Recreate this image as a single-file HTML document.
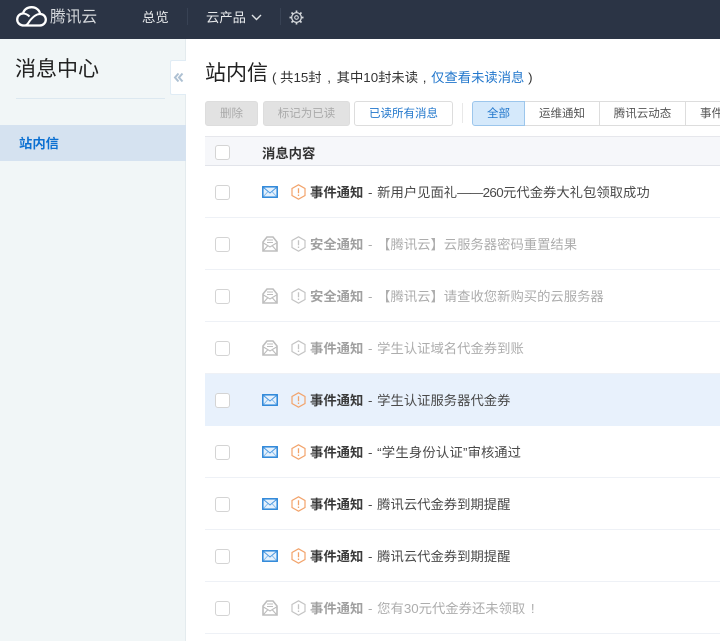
<!DOCTYPE html>
<html lang="zh"><head><meta charset="utf-8"><title>消息中心</title>
<style>
*{box-sizing:border-box}
html,body{margin:0;padding:0}
body{width:720px;height:641px;overflow:hidden;position:relative;background:#fff;font-family:"Liberation Sans","Noto Sans CJK SC",sans-serif;font-size:13.33px;color:#333}
.a{position:absolute;white-space:nowrap}
#nav{left:0;top:0;width:720px;height:39px;background:#2b3445}
#side{left:0;top:39px;width:186px;height:602px;background:#f1f6f7;border-right:1px solid #e4ebee}
.btn{height:25px;line-height:24px;text-align:center;font-size:11.5px;border:1px solid #ddd;border-radius:3px;top:101px}
.dis{background:#e2e2e2;color:#aaa;border-color:#ddd}
.tab{top:101px;height:25px;line-height:24px;text-align:center;font-size:11.5px;border:1px solid #ddd;border-left:0;color:#555;background:#fff}
.cb{left:215px;width:15px;height:15px;border:1px solid #d4d4d4;border-radius:3px;background:#fff}
.row{left:205px;width:515px;height:52px;border-bottom:1px solid #eef1f6}
.t{left:310px;font-size:13.33px;line-height:20px;word-spacing:1px;margin-top:1px}
.t b{font-weight:bold}
.un{color:#4a4a4a}.un b{color:#3a3a3a}
.rd{color:#adadad}.rd b{color:#a0a0a0}
.c{display:inline-block;text-align:center}
svg{position:absolute;overflow:visible}
</style></head><body>
<div class="a" id="nav">
<svg style="left:16px;top:6px" width="31" height="21" viewBox="0 0 31 21" fill="none" stroke="#fff" stroke-width="2.300" stroke-linejoin="round"><path d="M8 19.500C3.500 19.500 1.200 16.500 1.200 13.500C1.200 10 4 7.500 7 7.500C8 3.500 11.500 1.200 15.500 1.200C20 1.200 23.500 4 24.200 8C27.500 8 29.800 10.500 29.800 13.800C29.800 17 27 19.500 23.500 19.500H8Z"/><path d="M24.200 8C20 8 17 11 14 14.500C12.500 16.500 11.500 19.500 8 19.500M7 7.500C10 7.500 12 9 13.500 10.500" stroke-width="2"/></svg>
<div class="a" style="left:50px;top:8px;font-size:15.700px;line-height:20px;color:#d5d8dc">腾讯云</div>
<div class="a" style="left:142px;top:8px;line-height:20px;color:#e6e8ea">总览</div>
<div class="a" style="left:187px;top:8px;width:1px;height:17px;background:#384254"></div>
<div class="a" style="left:206px;top:8px;line-height:20px;color:#e6e8ea">云产品</div>
<svg style="left:251px;top:14px" width="11" height="7" viewBox="0 0 11 7" fill="none" stroke="#dfe2e5" stroke-width="1.400"><path d="M1 1L5.500 5.500L10 1"/></svg>
<div class="a" style="left:280px;top:8px;width:1px;height:17px;background:#384254"></div>
<svg style="left:289px;top:10px" width="15" height="15" viewBox="0 0 15 15" fill="none" stroke="#d5d8dc"><circle cx="7.500" cy="7.500" r="4.800" stroke-width="1.200"/><circle cx="7.500" cy="7.500" r="1.800" stroke-width="1.100"/><path stroke-width="1.700" d="M7.500 .5V2.800M7.500 12.200V14.500M.5 7.500H2.800M12.200 7.500H14.500M2.500 2.500L4.200 4.200M10.800 10.800L12.500 12.500M2.500 12.500L4.200 10.800M10.800 4.200L12.500 2.500"/></svg>
</div>
<div class="a" id="side"></div>
<div class="a" style="left:15px;top:56px;font-size:21px;line-height:28px;color:#222">消息中心</div>
<div class="a" style="left:16px;top:98px;width:149px;height:1px;background:#dce8f0"></div>
<div class="a" style="left:170px;top:60px;width:16px;height:35px;background:#fff;border:1px solid #e0ecf5;border-right:0;border-radius:2px 0 0 2px"></div>
<svg style="left:174px;top:73px" width="9" height="9" viewBox="0 0 9 9" fill="none" stroke="#adc0d2" stroke-width="2"><path d="M4.500 .5L1 4.500L4.500 8.500M8.500 .5L5 4.500L8.500 8.500"/></svg>
<div class="a" style="left:0;top:125px;width:186px;height:36px;background:#d5e2f0"></div>
<div class="a" style="left:19px;top:134px;line-height:20px;font-weight:bold;color:#0b70d2">站内信</div>

<div class="a" style="left:205px;top:59px;font-size:21px;line-height:30px;color:#222">站内信</div>
<div class="a" style="left:272px;top:68px;line-height:20px;color:#333">( 共15封<span class="c" style="width:15px">,</span>其中10封未读<span class="c" style="width:13px">,</span><span style="color:#2277cc">仅查看未读消息</span> )</div>

<div class="a btn dis" style="left:205px;width:53px">删除</div>
<div class="a btn dis" style="left:263px;width:87px">标记为已读</div>
<div class="a btn" style="left:354px;width:99px;background:#fff;color:#2277cc">已读所有消息</div>
<div class="a" style="left:462px;top:103px;width:1px;height:20px;background:#e8e8e8"></div>
<div class="a tab" style="left:472px;width:53px;background:#d5e9fb;border:1px solid #9cc6ec;border-radius:3px 0 0 3px;color:#2277cc">全部</div>
<div class="a tab" style="left:525px;width:75px">运维通知</div>
<div class="a tab" style="left:600px;width:86px">腾讯云动态</div>
<div class="a tab" style="left:686px;width:75px">事件通知</div>

<div class="a" style="left:205px;top:136px;width:515px;height:30px;background:#f6f7fa;border-top:1px solid #e6e7ec;border-bottom:1px solid #e2e4ea"></div>
<div class="a cb" style="top:145px"></div>
<div class="a" style="left:262px;top:144px;line-height:20px;font-weight:bold;color:#333">消息内容</div>

<div class="a row" style="top:166px"></div>
<div class="a row" style="top:218px"></div>
<div class="a row" style="top:270px"></div>
<div class="a row" style="top:322px"></div>
<div class="a row" style="top:374px;background:#e8f1fc;border-bottom:0"></div>
<div class="a row" style="top:426px"></div>
<div class="a row" style="top:478px"></div>
<div class="a row" style="top:530px"></div>
<div class="a row" style="top:582px"></div>

<svg width="0" height="0"><defs>
<g id="m"><rect x=".8" y=".8" width="14.400" height="10.400" fill="#e6f1fc" stroke="#2a85d8" stroke-width="1.500"/><path d="M1.500 1.500L8 7L14.500 1.500" fill="none" stroke="#4a98e0" stroke-width="1"/><path d="M1.500 10.500L6 5.500M14.500 10.500L10 5.500" fill="none" stroke="#7db6ea" stroke-width=".9"/></g>
<g id="o" fill="none" stroke="#bdbdbd"><path d="M1 6L5 1H11L15 6V15H1Z" stroke-width="1.600"/><path d="M5 4H11M5 6.500H11" stroke-width="1"/><path d="M1.500 7L8 11L14.500 7M1.500 14.500L6 9.500M14.500 14.500L10 9.500" stroke-width="1.100"/></g>
<g id="h"><path d="M7.500 .8L14 4.500V11.500L7.500 15.200L1 11.500V4.500Z" fill="none" stroke-width="1.200"/><path d="M7.500 4.300V9.300M7.500 10.500V12" fill="none" stroke-width="1.300"/></g>
</defs></svg>

<div class="a cb" style="top:185px"></div>
<svg style="left:262px;top:186px" width="16" height="12"><use href="#m"/></svg>
<svg style="left:291px;top:184px" width="15" height="16" stroke="#f2a36b"><use href="#h"/></svg>
<div class="a t un" style="top:182px"><b>事件通知</b> - 新用户见面礼<span style="letter-spacing:-.6px">——260</span>元代金券大礼包领取成功</div>

<div class="a cb" style="top:237px"></div>
<svg style="left:262px;top:236px" width="16" height="16"><use href="#o"/></svg>
<svg style="left:291px;top:236px" width="15" height="16" stroke="#c4c4c4"><use href="#h"/></svg>
<div class="a t rd" style="top:234px"><b>安全通知</b> - 【腾讯云】云服务器密码重置结果</div>

<div class="a cb" style="top:289px"></div>
<svg style="left:262px;top:288px" width="16" height="16"><use href="#o"/></svg>
<svg style="left:291px;top:288px" width="15" height="16" stroke="#c4c4c4"><use href="#h"/></svg>
<div class="a t rd" style="top:286px"><b>安全通知</b> - 【腾讯云】请查收您新购买的云服务器</div>

<div class="a cb" style="top:341px"></div>
<svg style="left:262px;top:340px" width="16" height="16"><use href="#o"/></svg>
<svg style="left:291px;top:340px" width="15" height="16" stroke="#c4c4c4"><use href="#h"/></svg>
<div class="a t rd" style="top:338px"><b>事件通知</b> - 学生认证域名代金券到账</div>

<div class="a cb" style="top:393px"></div>
<svg style="left:262px;top:394px" width="16" height="12"><use href="#m"/></svg>
<svg style="left:291px;top:392px" width="15" height="16" stroke="#f2a36b"><use href="#h"/></svg>
<div class="a t un" style="top:390px"><b>事件通知</b> - 学生认证服务器代金券</div>

<div class="a cb" style="top:445px"></div>
<svg style="left:262px;top:446px" width="16" height="12"><use href="#m"/></svg>
<svg style="left:291px;top:444px" width="15" height="16" stroke="#f2a36b"><use href="#h"/></svg>
<div class="a t un" style="top:442px"><b>事件通知</b> - <span style="letter-spacing:.2px">“学生身份认证”</span>审核通过</div>

<div class="a cb" style="top:497px"></div>
<svg style="left:262px;top:498px" width="16" height="12"><use href="#m"/></svg>
<svg style="left:291px;top:496px" width="15" height="16" stroke="#f2a36b"><use href="#h"/></svg>
<div class="a t un" style="top:494px"><b>事件通知</b> - 腾讯云代金券到期提醒</div>

<div class="a cb" style="top:549px"></div>
<svg style="left:262px;top:550px" width="16" height="12"><use href="#m"/></svg>
<svg style="left:291px;top:548px" width="15" height="16" stroke="#f2a36b"><use href="#h"/></svg>
<div class="a t un" style="top:546px"><b>事件通知</b> - 腾讯云代金券到期提醒</div>

<div class="a cb" style="top:601px"></div>
<svg style="left:262px;top:600px" width="16" height="16"><use href="#o"/></svg>
<svg style="left:291px;top:600px" width="15" height="16" stroke="#c4c4c4"><use href="#h"/></svg>
<div class="a t rd" style="top:598px"><b>事件通知</b> - 您有30元代金券还未领取<span class="c" style="width:13px;margin-left:1px">!</span></div>
</body></html>
